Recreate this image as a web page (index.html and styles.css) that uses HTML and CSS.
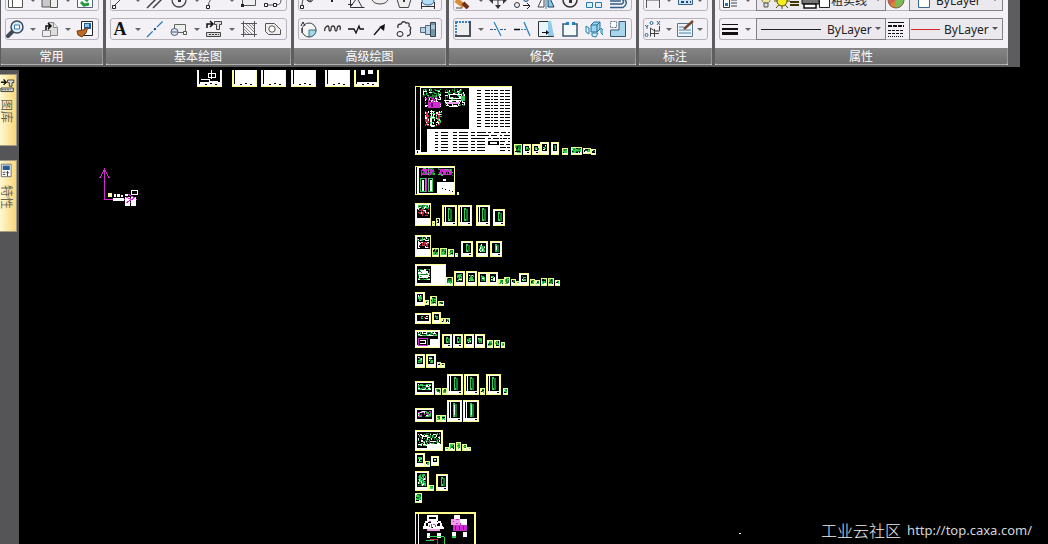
FILE: index.html
```html
<!DOCTYPE html>
<html lang="zh-CN">
<head>
<meta charset="utf-8">
<title>CAXA</title>
<link rel="stylesheet" href="styles.css">
</head>
<body>
<div class="app">
<header class="ribbon">
  <section class="panel">
    <div class="rows">
      <div class="group">
        <button class="tool" aria-label="新建"><svg viewBox="0 0 18 18"><path d="M2.500 5v11.500h5M6.500 2.500h10v14h-10z" fill="#fff" stroke="#555"/></svg></button><button class="more" aria-label="更多"></button>
        <button class="tool" aria-label="粘贴"><svg viewBox="0 0 18 18"><path d="M1 3h11v13H1z" fill="#c9c9cc" stroke="#555"/><path d="M9.500 8.500h7v8h-7z" fill="#eee" stroke="#555"/></svg></button><button class="more" aria-label="更多"></button>
        <button class="tool" aria-label="刷新"><svg viewBox="0 0 18 18"><path d="M1.500 1v15.500h15V1" fill="#fff" stroke="#53627a"/><path d="M5 11l3 3 5-1M12 10l-4-3" fill="none" stroke="#259b45" stroke-width="3"/></svg></button>
      </div>
      <div class="group">
        <button class="tool" aria-label="缩放"><svg viewBox="0 0 18 18"><path d="M6 12l-4 4" stroke="#3d4a5c" stroke-width="4" stroke-linecap="round"/><circle cx="11" cy="7" r="6" fill="#d7edf9" stroke="#3d4a5c" stroke-width="1.500"/><path d="M8.500 5h5v4h-5z" fill="#fff" stroke="#3e78aa"/></svg></button><button class="more" aria-label="更多"></button>
        <button class="tool" aria-label="插入块"><svg viewBox="0 0 18 18"><path d="M7.500 2.500h5l4 5v8h-9z" fill="#ddd" stroke="#888"/><path d="M12.500 2.500v5h4M1.500 10.500h8v6h-8z" fill="#eee" stroke="#888"/><path d="M5 10V6h5M7 3l3 3-3 3" fill="none" stroke="#111" stroke-width="1.500"/></svg></button><button class="more" aria-label="更多"></button>
        <button class="tool" aria-label="特性匹配"><svg viewBox="0 0 18 18"><path d="M5.500 1.500h11v14h-11z" fill="#fff" stroke="#222"/><path d="M8 3h7v6H8z" fill="#1f5fa0"/><path d="M9 4h4v3H9z" fill="#8fc3ea"/><path d="M1 11l6-1 5-3-2 6-4 4-4-2z" fill="#bf6a22" stroke="#713b12"/></svg></button>
      </div>
    </div>
    <h2 class="caption">常用</h2>
  </section>

  <section class="panel">
    <div class="rows">
      <div class="group">
        <button class="tool" aria-label="直线"><svg viewBox="0 0 18 18"><path d="M3 15L15 3" stroke="#444"/><path d="M1.500 14.500h3v3h-3z" fill="#fff" stroke="#222"/></svg></button><button class="more" aria-label="更多"></button>
        <button class="tool gap" aria-label="平行线"><svg viewBox="0 0 18 18"><path d="M1 17L14 4M7 17L18 6" stroke="#444" stroke-width="1.500"/></svg></button>
        <button class="tool" aria-label="圆"><svg viewBox="0 0 18 18"><circle cx="9" cy="9" r="7" fill="none" stroke="#444" stroke-width="1.300"/><path d="M8 8h3v3H8z" fill="#333"/></svg></button><button class="more" aria-label="更多"></button>
        <button class="tool" aria-label="圆弧"><svg viewBox="0 0 18 18"><path d="M3 16q1-10 11-13" fill="none" stroke="#555"/><path d="M1.500 14.500h3v3h-3z" fill="#fff" stroke="#222"/></svg></button><button class="more" aria-label="更多"></button>
        <button class="tool gap" aria-label="矩形"><svg viewBox="0 0 18 18"><path d="M2.500 4.500h13v10h-13z" fill="#eee" stroke="#555"/><path d="M1 13h3v3H1zM14 3h3v3h-3z" fill="#222"/></svg></button>
        <button class="tool" aria-label="多段线"><svg viewBox="0 0 18 18"><path d="M2 14h10q5 0 5-5t-5-5" fill="none" stroke="#555"/><path d="M.5 12.500h3v3h-3zM9.500 12.500h3v3h-3z" fill="#fff" stroke="#222"/></svg></button>
      </div>
      <div class="group">
        <button class="tool letter" aria-label="文字">A</button><button class="more" aria-label="更多"></button>
        <button class="tool gap" aria-label="中心线"><svg viewBox="0 0 18 18"><path d="M1 17L17 1" stroke="#2876b8" stroke-width="1.300" stroke-dasharray="8 2 2 2"/><path d="M8 8h2v2H8z" fill="#174a7a"/></svg></button>
        <button class="tool" aria-label="图块"><svg viewBox="0 0 18 18"><path d="M4.500 4.500h11v8h-11z" fill="#eee" stroke="#666"/><circle cx="4.500" cy="12" r="3.500" fill="#dbe9f2" stroke="#557"/><path d="M2 12h5" stroke="#557"/><path d="M13.500 11.500h3v3h-3z" fill="#fff" stroke="#555"/></svg></button><button class="more" aria-label="更多"></button>
        <button class="tool" aria-label="图库"><svg viewBox="0 0 18 18"><path d="M2 8V4h5M5 1l3 3-3 3" fill="none" stroke="#111" stroke-width="1.500"/><path d="M9.500 1.500h7v3h-2v5h-3v-5h-2zM1.500 12.500h14v4h-14z" fill="#ddd" stroke="#444"/><path d="M4 14.500h10" stroke="#333" stroke-dasharray="2 1"/></svg></button><button class="more" aria-label="更多"></button>
        <button class="tool gap" aria-label="剖面线"><svg viewBox="0 0 18 18"><path d="M1 3.500h16M1 14.500h16M3.500 1v16M14.500 1v16" stroke="#555"/><path d="M4 6l8 8M4 9l5 5M6 4l8 8M9 4l5 5M4 12l2 2M12 4l2 2" stroke="#888"/></svg></button>
        <button class="tool" aria-label="局部放大"><svg viewBox="0 0 18 18"><path d="M1.500 3.500h9l6 6v5h-12l-3-3z" fill="#eee" stroke="#555"/><circle cx="8" cy="9" r="3.200" fill="#fff" stroke="#555"/></svg></button>
      </div>
    </div>
    <h2 class="caption">基本绘图</h2>
  </section>

  <section class="panel">
    <div class="rows">
      <div class="group">
        <button class="tool gap" aria-label="样条"><svg viewBox="0 0 18 18"><path d="M3 16q0-12 5-7t7-3" fill="none" stroke="#444"/><path d="M1.500 14.500h3v3h-3zM9 7h3v3H9z" fill="#fff" stroke="#222"/></svg></button>
        <button class="tool gap" aria-label="点"><svg viewBox="0 0 18 18"><path d="M8 9h2v2H8z" fill="#222"/></svg></button>
        <button class="tool gap" aria-label="公式曲线"><svg viewBox="0 0 18 18"><path d="M3.500 3v13.500h14M1 13.500h5M4 15l6-8 5 9" fill="none" stroke="#333"/></svg></button>
        <button class="tool gap" aria-label="椭圆"><svg viewBox="0 0 18 18"><ellipse cx="9" cy="8" rx="8" ry="5" fill="#eee" stroke="#444"/></svg></button>
        <button class="tool gap" aria-label="正多边形"><svg viewBox="0 0 18 18"><path d="M9 2l7 6-2.500 8.500h-9L2 8z" fill="#eee" stroke="#444"/><path d="M8 9h2v2H8z" fill="#333"/></svg></button>
        <button class="tool" aria-label="圆柱"><svg viewBox="0 0 18 18"><path d="M2.500 18v-7M15.500 18v-7M2 15.500h14" fill="none" stroke="#333"/><path d="M3 9q0 5 6 5t6-5" fill="#b5dcf2" stroke="#2d6796"/></svg></button>
      </div>
      <div class="group">
        <button class="tool gap" aria-label="轮廓"><svg viewBox="0 0 18 18"><circle cx="10" cy="10" r="7" fill="#f5f5f5" stroke="#444"/><path d="M10 10h7q0 6-7 7z" fill="#a9d6ee" stroke="#377"/><path d="M2 6l2-4 2 4M3 13V8" fill="none" stroke="#222"/></svg></button>
        <button class="tool gap" aria-label="波浪线"><svg viewBox="0 0 18 18"><path d="M2 11q-1-2 1-4t3 0v3q1 2 2 0 0-4 2-4t2 4q1 2 2 0 0-4 2-4t1 4" fill="none" stroke="#333" stroke-width="1.300"/></svg></button>
        <button class="tool gap" aria-label="双折线"><svg viewBox="0 0 18 18"><path d="M1 9h6l2 4 3-7 1 3h4" fill="none" stroke="#111" stroke-width="1.300"/></svg></button>
        <button class="tool gap" aria-label="箭头"><svg viewBox="0 0 18 18"><path d="M3 15l6-7" stroke="#111" stroke-width="1.300"/><path d="M14 4l-1 7-5-4z" fill="#111"/></svg></button>
        <button class="tool gap" aria-label="云线"><svg viewBox="0 0 18 18"><path d="M3 8q-1-4 3-4 2-4 5-1 4-1 3 3 3 2 1 4 2 5-3 6" fill="none" stroke="#333" stroke-width="1.300"/><ellipse cx="5" cy="14" rx="3" ry="2.500" fill="none" stroke="#222"/></svg></button>
        <button class="tool" aria-label="孔轴"><svg viewBox="0 0 18 18"><path d="M1.500 7.500h5v5h-5zM6.500 5.500h5v9h-5z" fill="#b8d6e8" stroke="#567"/><path d="M11.500 2.500h5v14h-5z" fill="#7894a8" stroke="#345"/><path d="M12 6h4M12 8h4" stroke="#e7f3fb"/></svg></button>
      </div>
    </div>
    <h2 class="caption">高级绘图</h2>
  </section>

  <section class="panel">
    <div class="rows">
      <div class="group">
        <button class="tool" aria-label="删除"><svg viewBox="0 0 18 18"><path d="M2 9l8 6" stroke="#d98a36" stroke-width="5"/><path d="M9 12l5 5" stroke="#702f18" stroke-width="4"/><path d="M2 17h6" stroke="#444"/></svg></button><button class="more" aria-label="更多"></button>
        <button class="tool gap" aria-label="移动"><svg viewBox="0 0 18 18"><path d="M9 1v16M1 9h16" stroke="#333"/><path d="M6 14h6l-3 4zM14 6v7l4-4zM4 6v7L0 9z" fill="#333"/></svg></button>
        <button class="tool gap" aria-label="复制"><svg viewBox="0 0 18 18"><circle cx="4" cy="14" r="2.500" fill="none" stroke="#333"/><circle cx="13" cy="8" r="2.500" fill="#9dd0ee" stroke="#357"/><path d="M10 14.500h6M14 12l3 3-3 3" fill="none" stroke="#222"/></svg></button>
        <button class="tool gap" aria-label="镜像"><svg viewBox="0 0 18 18"><path d="M7 3v13H1z" fill="#fff" stroke="#444"/><path d="M11 3v13h6z" fill="#8dc6e8" stroke="#246"/><path d="M9 1v17" stroke="#28a"/></svg></button>
        <button class="tool gap" aria-label="旋转"><svg viewBox="0 0 18 18"><circle cx="9" cy="9" r="7" fill="none" stroke="#333" stroke-width="1.500"/><path d="M8 9h3v3H8z" fill="#333"/></svg></button>
        <button class="tool gap" aria-label="阵列"><svg viewBox="0 0 18 18"><path d="M1.500 2.500h6v5h-6zM1.500 11.500h6v5h-6zM10.500 11.500h6v5h-6z" fill="#ddf0fc" stroke="#287aaf"/></svg></button>
        <button class="tool" aria-label="偏移"><svg viewBox="0 0 18 18"><path d="M1 10h11M1 13h12q3-2 0-5M1 16.500h13q6-4 1-9" fill="none" stroke="#315e8b" stroke-width="1.500"/></svg></button>
      </div>
      <div class="group">
        <button class="tool" aria-label="裁剪框"><svg viewBox="0 0 18 18"><path d="M2 2h14v14H2z" fill="#eee" stroke="#3a84be" stroke-width="2" stroke-dasharray="2 1"/><path d="M16 1v15H1" fill="none" stroke="#4b5059" stroke-width="2"/></svg></button><button class="more" aria-label="更多"></button>
        <button class="tool gap" aria-label="裁剪"><svg viewBox="0 0 18 18"><path d="M1 9.500h6M11 9.500h6" stroke="#357" stroke-dasharray="3 1"/><path d="M5 2l7 14" stroke="#2a83c4" stroke-width="1.300"/></svg></button>
        <button class="tool gap" aria-label="延伸"><svg viewBox="0 0 18 18"><path d="M1 9.500h6" stroke="#111" stroke-width="1.500"/><path d="M8 9.500h5" stroke="#38a" stroke-dasharray="2 1"/><path d="M11 2l6 14" stroke="#2a83c4" stroke-width="1.300"/></svg></button>
        <button class="tool gap" aria-label="拉伸"><svg viewBox="0 0 18 18"><path d="M1.500 1.500h10l5 15h-15z" fill="#e9f5fc" stroke="#333"/><path d="M11 1h3l3 15h-6z" fill="#91cbea"/><path d="M5 12.500h5" stroke="#111"/><path d="M9 10l3 2.500L9 15z" fill="#111"/></svg></button>
        <button class="tool gap" aria-label="打断"><svg viewBox="0 0 18 18"><path d="M6 4H2v12h14V4h-4" fill="#f3f8fb" stroke="#405871" stroke-width="1.500"/><path d="M5 2h3v3H5zM11 2h3v3h-3z" fill="#287fbd"/></svg></button>
        <button class="tool gap" aria-label="分解"><svg viewBox="0 0 18 18"><path d="M6 5l3-3h6v7l-3 3H6zM6 5h6v7M12 5l3-3" fill="#9bd4ee" stroke="#216e9e"/><path d="M1 6l3 2v6l-3-2zM7 13h6l-2 4-4-1zM16 8l2 2v5l-2-2z" fill="#d6effa" stroke="#287eac"/></svg></button>
        <button class="tool" aria-label="缩放图形"><svg viewBox="0 0 18 18"><path d="M10 1.500h6.500v15h-15V10H10z" fill="#a7d6ed" stroke="#39566d"/><path d="M1.500 1.500h6v6h-6z" fill="#fff" stroke="#678" stroke-dasharray="2 1"/></svg></button>
      </div>
    </div>
    <h2 class="caption">修改</h2>
  </section>

  <section class="panel">
    <div class="rows dims">
      <div class="group">
        <button class="tool" aria-label="尺寸标注"><svg viewBox="0 0 18 18"><path d="M2.500 17V8M15.500 17V8M3 9h12" stroke="#555"/></svg></button><button class="more" aria-label="更多"></button>
        <button class="tool" aria-label="符号标注"><svg viewBox="0 0 18 18"><path d="M2.500 3.500h14v10h-14z" fill="#cfe4f2" stroke="#35638c"/><path d="M5 11h3M10 11h2M14 11h1" stroke="#247" stroke-width="2"/></svg></button><button class="more" aria-label="更多"></button>
      </div>
      <div class="group">
        <button class="tool" aria-label="坐标标注"><svg viewBox="0 0 18 18"><path d="M6.500 16.500V8l4 3h5V6M6 13.500h9M10.500 9v8" fill="none" stroke="#444"/><path d="M1 5l2 2 1-2M3 7v2M13 1l3 4M16 1l-3 4" fill="none" stroke="#246993"/><circle cx="7.500" cy="3" r="1.500" fill="none" stroke="#246993"/><circle cx="2.500" cy="15" r="1.500" fill="none" stroke="#246993"/></svg></button><button class="more" aria-label="更多"></button>
        <button class="tool" aria-label="标注编辑"><svg viewBox="0 0 18 18"><path d="M1.500 3.500h15v13h-15z" fill="#eef5fa" stroke="#567891"/><path d="M3 7h5M3 10h12M3 13h12" stroke="#4d83ad"/><path d="M8 9l9-8" stroke="#7c4331" stroke-width="2.500"/></svg></button><button class="more" aria-label="更多"></button>
      </div>
    </div>
    <h2 class="caption">标注</h2>
  </section>

  <section class="panel props">
    <div class="rows">
      <div class="group fields">
        <button class="tool" aria-label="图层"><svg viewBox="0 0 18 18"><path d="M2.500 4.500h6v12h-6z" fill="#fff" stroke="#333"/><path d="M4 12h3v3H4z" fill="#2877b6"/><path d="M10 9h6M10 12h6M10 15h6" stroke="#345"/></svg></button><button class="more" aria-label="更多"></button>
        <label class="combo wide"><svg class="states" viewBox="0 0 72 18"><path d="M3 5h8v5l-2 2H5l-2-2z" fill="#f4e798" stroke="#887"/><path d="M5 12h4v4H5z" fill="#ddd" stroke="#555"/><path d="M15 10h16M23 2v17M17 4l12 13M29 4L17 17" stroke="#544b00"/><circle cx="23" cy="10" r="5" fill="#f4ed22" stroke="#524f00"/><path d="M31 8h8M31 11h9M31 14h9" stroke="#3c3900" stroke-width="2"/><path d="M43 7h17v6H43z" fill="#777" stroke="#111"/><path d="M45 13h12v4H45z" fill="#fff" stroke="#111" stroke-width="1.500"/><path d="M60.500 6.500h10v10h-10z" fill="#fff" stroke="#222"/></svg><select class="layer" aria-label="当前图层"><option>粗实线</option></select></label>
        <button class="tool" aria-label="颜色"><svg viewBox="0 0 18 18"><circle cx="9" cy="9" r="8" fill="#ead65a"/><path d="M9 9L2 14A8 8 0 0 0 9 17z" fill="#d58939"/><path d="M9 9v8a8 8 0 0 0 8-8z" fill="#7cbc55"/><path d="M9 9H1q0 3 2 5z" fill="#d4604d"/><circle cx="9" cy="9" r="8" fill="none" stroke="#8c6044"/></svg></button>
        <label class="combo narrow"><svg class="swatch" viewBox="0 0 26 18"><path d="M8.500 5.500h11v11h-11z" fill="#fff" stroke="#3c6797"/></svg><select aria-label="当前颜色"><option>ByLayer</option></select></label>
      </div>
      <div class="group fields">
        <button class="tool" aria-label="线宽"><svg viewBox="0 0 18 18"><path d="M1 4.500h16" stroke="#111"/><path d="M1 9h16" stroke="#111" stroke-width="2"/><path d="M1 13.500h16" stroke="#111" stroke-width="3"/></svg></button><button class="more" aria-label="更多"></button>
        <label class="combo wide"><span class="rule"></span><select aria-label="当前线宽"><option>ByLayer</option></select></label>
        <button class="tool" aria-label="线型"><svg viewBox="0 0 18 18"><path d="M1 2.500h16" stroke="#111"/><path d="M1 6h16" stroke="#111" stroke-width="2" stroke-dasharray="4 1"/><path d="M1 10.500h16M1 13.500h16" stroke="#111" stroke-dasharray="3 1"/><path d="M1 16.500h16" stroke="#111" stroke-dasharray="1 1"/></svg></button>
        <label class="combo narrow"><span class="rule red"></span><select aria-label="当前线型"><option>ByLayer</option></select></label>
      </div>
    </div>
    <h2 class="caption">属性</h2>
  </section>
</header>

<main class="workspace">
  <nav class="dock">
    <button class="tab"><svg viewBox="0 0 18 18"><path d="M1 7h5M4 4l3 3-3 3" fill="none" stroke="#111" stroke-width="1.500"/><path d="M8.500 4.500h7v3h-2v4h-3v-4h-2zM1 13.500h14v4H1z" fill="#ddd" stroke="#333"/><path d="M2 15.500h10" stroke="#222" stroke-dasharray="2 1"/></svg><span>图库</span></button>
    <button class="tab"><svg viewBox="0 0 18 18"><path d="M1.500 2.500h11v14h-11z" fill="#fff" stroke="#667"/><path d="M3 4h8v5H3z" fill="#285d91"/><path d="M3 11.500h3M3 14h3M8.500 10v6M7 12h3" stroke="#333"/></svg><span>特性</span></button>
  </nav>
  <div class="canvas">
    <svg class="drawing" aria-label="图纸"></svg>
    <footer class="credit"><span class="community">工业云社区</span><a href="http://top.caxa.com/">http://top.caxa.com/</a></footer>
  </div>
</main>
</div>
<script src="drawing.js"></script>
</body>
</html>
```
FILE: styles.css
```css
* { box-sizing: border-box; }
body {
  margin: 0;
  background: #000;
  font-family: "Noto Sans", "Noto Sans CJK SC", sans-serif;
  font-size: 12px;
}
button, select { font: inherit; border: 0; padding: 0; margin: 0; background: none; }
.app { display: flex; flex-direction: column; height: 100vh; }
.ribbon {
  display: flex;
  gap: 3px;
  width: fit-content;
  padding: 0 12px 2px 1px;
  overflow: hidden;
  background: #5d5d60;
  flex: none;
}
.panel { display: flex; flex-direction: column; background: #f4f1f6; }
.rows {
  display: flex;
  flex-direction: column;
  gap: 7px;
  margin-top: -11px;
  padding: 0 4px 8px;
}
.group {
  display: flex;
  align-items: center;
  height: 22px;
  padding-right: 4px;
  border: 1px solid #b6b4ba;
  border-radius: 3px;
}
.tool { width: 18px; height: 18px; flex: none; }
.tool svg { display: block; width: 18px; height: 18px; }
.gap { margin-right: 6px; }
.letter { font: bold 18px/18px "Liberation Serif", serif; color: #111; }
.more { width: 17px; height: 18px; flex: 0 1 17px; display: flex; align-items: center; justify-content: center; }
.more::before {
  content: "";
  border: 3px solid transparent;
  border-top-color: #666;
  border-bottom: 0;
}
.caption {
  height: 17px;
  margin: 0;
  border-bottom: 1px solid #b2b2b2;
  border-right: 1px solid #999;
  border-radius: 0 0 2px 2px;
  background: linear-gradient(#858585, #707070);
  color: #fff;
  font-size: 12px;
  line-height: 17px;
  font-weight: 400;
  text-align: center;
}
.dims { width: 73px; }
.dims .group { padding-right: 0; }
.props { width: 293px; }
.fields { padding: 0; border-right-color: transparent; }
.fields .tool { margin: 0 4px 0 1px; }
.fields .tool:first-child { margin-right: 0; }
.combo {
  display: flex;
  align-items: center;
  position: relative;
  height: 22px;
  border: 1px solid #858087;
  background: #ece9ee;
}
.combo::after {
  content: "";
  position: absolute;
  right: 4px;
  top: 8px;
  border: 3px solid transparent;
  border-top-color: #555;
  border-bottom: 0;
}
.wide { flex: 1; }
.narrow { width: 94px; flex: none; }
.combo select {
  appearance: none;
  width: 58px;
  height: 20px;
  padding-right: 12px;
  color: #222;
  flex: none;
}
.combo .layer { width: 52px; }
.rule { flex: 1; height: 1px; margin: 0 6px 0 4px; background: #222; }
.rule.red { margin: 0 4px 0 1px; background: #d9262c; }
.states { width: 72px; height: 18px; margin-left: 2px; }
.swatch { width: 26px; height: 18px; }
.workspace { display: flex; flex: 1; min-height: 0; }
.dock {
  width: 19px;
  flex: none;
  display: flex;
  flex-direction: column;
  gap: 14px;
  margin-top: 3px;
  padding: 4px 2px 0 0;
  background: #555557;
}
.tab {
  display: flex;
  flex-direction: column;
  align-items: flex-start;
  gap: 6px;
  width: 17px;
  height: 72px;
  flex: none;
  border: 1px solid #a39b83;
  border-left: 0;
  background: linear-gradient(90deg, #fff8d2, #f8d778);
  color: #6b6556;
}
.tab svg { width: 16px; height: 18px; flex: none; }
.tab span { writing-mode: vertical-rl; text-orientation: sideways; line-height: 13px; }
.canvas { position: relative; flex: 1; min-width: 0; overflow: hidden; background: #000; }
.drawing { display: block; width: 100%; height: 100%; }
.credit {
  position: absolute;
  right: 16px;
  bottom: 3px;
  display: flex;
  align-items: center;
  gap: 6px;
  line-height: 22px;
}
.community { font: 300 16px/22px "Noto Sans CJK SC", sans-serif; color: #f0f0f0; }
.credit a { font-size: 13px; color: #d2d6da; text-decoration: none; }
```
FILE: drawing.js
```javascript
const NS = "http://www.w3.org/2000/svg";
const root = document.querySelector(".drawing");
const layer = document.createElementNS(NS, "g");
layer.setAttribute("transform", "translate(-19 -67)");
layer.setAttribute("shape-rendering", "crispEdges");
root.append(layer);

const W = "#ffffff", Y = "#ffff8c", G = "#32d052", D = "#147c2d", M = "#d02bd0", R = "#c62d42", K = "#000000";
let seed = 7;
const rnd = () => (seed = (seed * 16807) % 2147483647) / 2147483647;
const pick = (list) => list[Math.floor(rnd() * list.length)];

function box(x, y, w, h, fill) {
  const r = document.createElementNS(NS, "rect");
  for (const [k, v] of Object.entries({ x, y, width: w, height: h, fill })) r.setAttribute(k, v);
  layer.append(r);
}
function path(d, stroke, width = 1) {
  const p = document.createElementNS(NS, "path");
  for (const [k, v] of Object.entries({ d, stroke, fill: "none", "stroke-width": width })) p.setAttribute(k, v);
  layer.append(p);
}
// Short strokes, so that neighbouring pixels join into linework
function scatter(x, y, w, h, colors, density) {
  for (let j = 0; j < h; j++)
    for (let i = 0; i < w;) {
      const n = Math.min(1 + Math.floor(rnd() * 3), w - i);
      if (rnd() < density) {
        const tall = rnd() > 0.5 && j < h - 1;
        box(x + i, y + j, tall ? 1 : n, tall ? 2 : 1, pick(colors));
      }
      i += n;
    }
}
function dashes(x, y, w, h, step = 3) {
  for (let j = y; j < y + h; j += step)
    for (let i = x; i < x + w;) {
      const n = 2 + Math.floor(rnd() * 5);
      box(i, j, Math.min(n, x + w - i), 1, K);
      i += n + 1 + Math.floor(rnd() * 3);
    }
}
function frame(x, y, w, h, edge = Y) {
  box(x, y, w, h, edge);
  box(x + 1, y + 1, w - 2, h - 2, W);
}

// p: part drawing, s: slim part, r: red section, t: tiny sheet
function sheet(x, y, w, h, kind) {
  frame(x, y, w, h, kind === "t" ? "#e8ff90" : Y);
  if (kind === "t") {
    if (w > 3) box(x + 2, y + 1, w - 3, h - 4, D);
    scatter(x + 1, y + 1, w - 2, h - 3, [G, G, K], 0.6);
  } else if (kind === "s") {
    box(x + 2, y + 2, w - 4, h - 6, K);
    if (w > 12) box(x + 3, y + 2, 1, h - 6, W);
    const c = x + Math.floor(w / 2);
    box(c - 1, y + 4, 4, h - 9, D);
    box(c - 1, y + 3, 2, h - 8, G);
    box(c, y + 5, 1, Math.max(h - 12, 1), rnd() > 0.5 ? K : W);
    box(x + w - 4, y + h - 3, 2, 1, K);
  } else if (kind === "r") {
    box(x + 2, y + 2, w - 3, h - 10, K);
    scatter(x + 2, y + 2, w - 4, 4, [G, W, D], 0.8);
    box(x + 4, y + 7, w - 7, 4, R);
    scatter(x + 3, y + 6, w - 5, h - 15, [R, K, W], 0.6);
  } else {
    box(x + 2, y + 2, w - 4, h - 6, K);
    box(x + 4, y + 4, w - 7, h - 9, G);
    scatter(x + 3, y + 3, w - 6, h - 8, [G, D, W, K], 0.65);
  }
}

for (const x of [197, 232, 261, 291, 325, 354]) {
  frame(x, 67, 25, 20);
  box(x, 67, 25, 3, K);
  box(x + 2, 70, 1, 14, K);
  box(x + 8, 84, 2, 1, K);
  box(x + 13, 83, 2, 1, K);
  box(x + 18, 84, 2, 1, K);
}
box(200, 70, 20, 12, K);
path("M208 73h7v4h-7zM211 70v9M201 79h8v2h9", W);
box(357, 70, 20, 12, K);
box(361, 70, 4, 5, W);
box(368, 70, 5, 4, W);

// Assembly sheet with its parts list
frame(415, 86, 97, 69);
box(416, 87, 4, 63, K);
box(421, 88, 48, 41, K);
box(421, 129, 6, 23, K);
box(417, 151, 1, 2, K);
for (let y = 90; y < 128; y += 3) {
  box(477, y, 4, 1, K); box(485, y, 5, 1, K); box(491, y, 2, 1, K);
  box(494, y, 4, 1, K); box(500, y, 4, 1, K); box(505, y, 5, 1, K);
}
for (let y = 132; y < 153; y += 3) {
  box(435, y, 3, 1, K); box(441, y, 7, 1, K); box(453, y, 4, 1, K);
  box(459, y, 9, 1, K); box(471, y, 4, 1, K); box(477, y, 8, 1, K);
}
dashes(472, 132, 38, 8);
box(488, 141, 11, 4, K);
box(490, 142, 7, 2, W);
dashes(500, 141, 10, 12);
path("M424 89l4 5M430 88v6M436 90l3 3M446 89l5 6M454 88v7M462 89l-4 7", D);
scatter(423, 89, 18, 8, [G, D, W], 0.55);
scatter(425, 96, 16, 11, [M, W, W, D], 0.75);
box(428, 102, 12, 6, M);
box(431, 103, 2, 4, "#5b0c67");
scatter(445, 89, 20, 17, [W, G, D, W], 0.5);
path("M449 94h12v4h-12zM444 100h17l-3 6h-9z", W);
path("M447 103h12", "#ef9ce9", 2);
box(461, 96, 4, 5, G);
box(426, 112, 2, 13, R);
box(438, 112, 2, 13, R);
scatter(425, 111, 4, 15, [R, W], 0.6);
scatter(430, 111, 5, 16, [W, W, G], 0.75);
scatter(436, 111, 6, 16, [R, W, G], 0.6);
box(431, 110, 1, 17, W);

// View sheet with magenta sections
frame(415, 166, 40, 29);
box(416, 167, 1, 27, K);
box(419, 168, 35, 25, K);
box(421, 169, 13, 6, M);
box(439, 169, 13, 6, M);
scatter(420, 168, 15, 8, [G, K, D], 0.35);
scatter(438, 168, 15, 8, [G, K, D], 0.35);
path("M420.500 178.500h5v13h-5zM428.500 178.500h4v13h-4z", G);
box(426, 178, 1, 14, M);
box(422, 180, 2, 11, W);
box(430, 180, 2, 11, W);
box(437, 182, 17, 12, W);
box(443, 179, 3, 2, W);
for (const [x, y] of [[442,188],[445,189],[449,190],[452,191]]) box(x, y, 1, 1, K);
sheet(457, 192, 2, 3, "t");

const sheets = [
  [514,144,8,11,"t"],[523,144,8,11,"s"],[532,144,8,11,"s"],[540,142,9,13,"p"],[551,142,8,13,"p"],[562,148,6,7,"t"],[571,147,11,8,"t"],[583,148,8,6,"t"],[591,149,5,6,"t"],
  [415,203,16,23,"r"],[432,221,3,5,"t"],[436,218,4,8,"t"],[442,205,15,21,"s"],[458,205,14,21,"s"],[476,205,14,21,"s"],[493,209,12,17,"s"],
  [415,235,16,22,"r"],[432,248,7,9,"t"],[440,248,7,9,"t"],[448,249,6,8,"t"],[455,253,3,4,"t"],[461,241,12,16,"s"],[476,241,12,16,"p"],[490,241,12,16,"s"],
  [445,277,8,9,"t"],[454,271,11,15,"p"],[466,271,11,15,"p"],[478,272,10,14,"p"],[488,272,10,14,"p"],[498,279,6,7,"t"],[504,277,6,9,"t"],[511,279,5,7,"t"],[516,281,4,5,"t"],[519,273,10,13,"p"],[530,279,5,7,"t"],[535,280,5,6,"t"],[541,278,6,8,"t"],[548,278,6,8,"t"],[555,280,5,6,"t"],
  [415,292,10,14,"p"],[425,300,4,5,"t"],[430,296,7,10,"t"],[438,301,6,5,"t"],
  [432,312,9,12,"p"],[441,318,4,6,"t"],[445,318,5,6,"t"],
  [442,334,10,14,"s"],[453,334,10,14,"s"],[464,334,10,14,"p"],[475,334,10,14,"p"],[487,340,6,8,"t"],[494,340,6,8,"t"],[501,342,4,6,"t"],
  [415,354,10,14,"p"],[426,354,10,14,"p"],[437,362,4,6,"t"],[441,363,4,5,"t"],
  [435,388,6,7,"t"],[442,388,5,7,"t"],[447,374,16,21,"s"],[464,374,15,21,"s"],[480,388,5,7,"t"],[486,374,15,21,"s"],[503,388,5,7,"t"],
  [436,415,5,7,"t"],[441,415,5,7,"t"],[447,400,15,22,"s"],[463,400,16,22,"s"],
  [445,447,4,4,"t"],[449,443,6,8,"t"],[456,442,5,9,"t"],[462,444,5,7,"t"],[467,447,4,4,"t"],
  [415,453,10,14,"p"],[425,461,5,6,"t"],[431,456,8,10,"p"],
  [415,471,14,20,"p"],[429,485,5,6,"t"],[436,474,12,17,"s"],
  [415,493,7,10,"t"]
];
for (const s of sheets) sheet(...s);

// Landscape sheets: dark field with the title block on white
function landscape(x, y, w, h, colors, density = 0.7) {
  frame(x, y, w, h);
  box(x + 2, y + 2, w - 4, h - 5, K);
  scatter(x + 3, y + 3, w - 6, h - 8, colors, density);
}
landscape(415, 264, 31, 22, [K]);
box(419, 271, 9, 7, W);
scatter(418, 269, 12, 11, [W, G, W, D], 0.7);
box(431, 265, 14, 20, W);
landscape(415, 313, 16, 11, [R, W, K, G]);
landscape(415, 330, 25, 18, [K]);
scatter(418, 332, 19, 4, [G, D, W], 0.8);
path("M418.500 338.500h9v7h-9z", M);
path("M420 340.500h5v3h-5", W);
box(430, 339, 9, 8, W);
landscape(415, 381, 19, 14, [G, W, G, D], 0.9);
landscape(415, 408, 19, 14, [G, W, M, D], 0.9);
landscape(415, 430, 28, 21, [G, W, K, D], 0.8);
box(427, 444, 15, 6, W);

// Cropped bottom sheet
box(415, 512, 61, 50, Y);
box(416, 514, 58, 48, K);
box(418, 514, 1, 40, W);
path("M428 516h9v4h-9zM426 522h14l2 5h-18z", W, 2);
box(428, 520, 10, 8, W);
box(423, 527, 21, 2, W);
box(427, 529, 13, 2, "#ef9ce9");
scatter(428, 521, 10, 7, [K, M], 0.15);
box(427, 533, 3, 5, W);
box(437, 533, 4, 5, W);
path("M429 536h15M426 540h8M444 537v7", G);
path("M430 539h7v5", R);
box(454, 515, 6, 4, W);
box(451, 519, 9, 6, "#ef9ce9");
box(460, 519, 7, 6, W);
box(453, 525, 14, 6, M);
scatter(452, 519, 10, 6, [K, M], 0.2);
for (const x of [455, 459, 463]) box(x, 526, 1, 4, "#5b0c67");
box(452, 532, 4, 5, W);
box(463, 532, 4, 5, W);
box(452, 536, 4, 2, G);

// User coordinate system marker and the small model beside it
path("M104.500 199V169.500M99.500 178.500l5-9 5 9M104 199.500h33M128 194l8 5-8 5", M);
frame(108, 193, 4, 4);
for (const [x, y, w, h] of [[114,194,2,3],[117,194,3,3],[121,195,2,2],[125,194,3,2],[113,198,11,3],[125,197,5,9],[131,197,5,9]]) box(x, y, w, h, W);
path("M131.500 190.500h6v4h-6z", W);
path("M126 203l9-6M126 197l7 3", M);
box(739, 533, 2, 1, W);
```
